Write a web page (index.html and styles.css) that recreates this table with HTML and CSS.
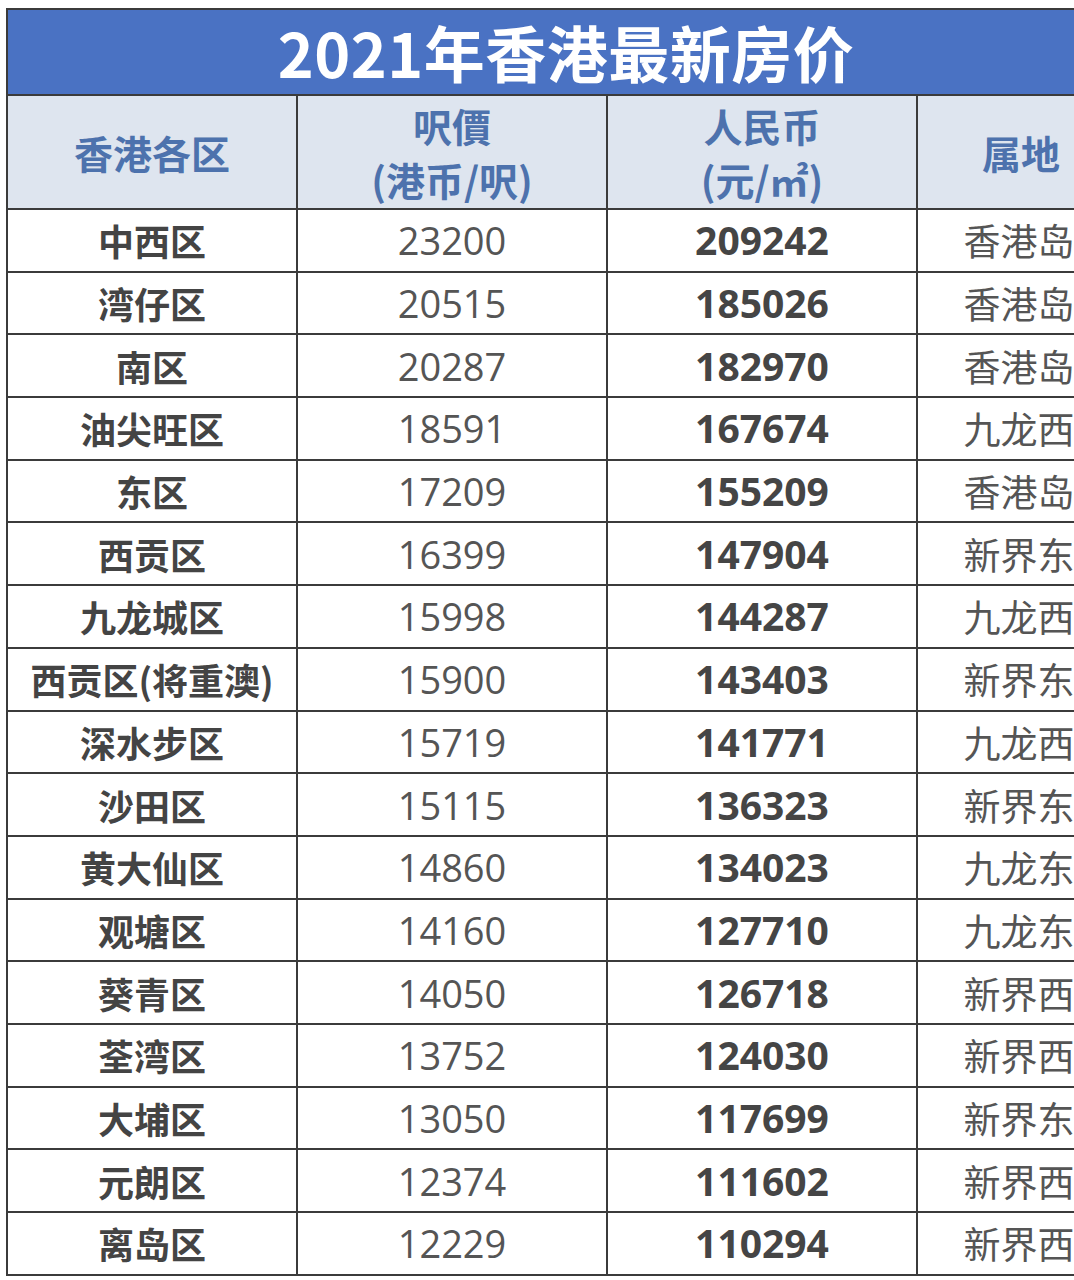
FILE: index.html
```html
<!DOCTYPE html>
<html lang="zh-CN">
<head>
<meta charset="utf-8">
<title>2021年香港最新房价</title>
<link rel="stylesheet" href="styles.css">
</head>
<body>
<table class="price-table">
  <colgroup>
    <col class="c1"><col class="c2"><col class="c3"><col class="c4">
  </colgroup>
  <thead>
    <tr><th class="title" colspan="4">2021年香港最新房价</th></tr>
    <tr class="head">
      <th>香港各区</th>
      <th><span class="hl">呎價</span><span class="hl">(港币/呎)</span></th>
      <th><span class="hl">人民币</span><span class="hl">(元/㎡)</span></th>
      <th>属地</th>
    </tr>
  </thead>
  <tbody>
    <tr><td class="area">中西区</td><td class="hkd">23200</td><td class="rmb">209242</td><td class="region">香港岛</td></tr>
    <tr><td class="area">湾仔区</td><td class="hkd">20515</td><td class="rmb">185026</td><td class="region">香港岛</td></tr>
    <tr><td class="area">南区</td><td class="hkd">20287</td><td class="rmb">182970</td><td class="region">香港岛</td></tr>
    <tr><td class="area">油尖旺区</td><td class="hkd">18591</td><td class="rmb">167674</td><td class="region">九龙西</td></tr>
    <tr><td class="area">东区</td><td class="hkd">17209</td><td class="rmb">155209</td><td class="region">香港岛</td></tr>
    <tr><td class="area">西贡区</td><td class="hkd">16399</td><td class="rmb">147904</td><td class="region">新界东</td></tr>
    <tr><td class="area">九龙城区</td><td class="hkd">15998</td><td class="rmb">144287</td><td class="region">九龙西</td></tr>
    <tr><td class="area">西贡区(将重澳)</td><td class="hkd">15900</td><td class="rmb">143403</td><td class="region">新界东</td></tr>
    <tr><td class="area">深水步区</td><td class="hkd">15719</td><td class="rmb">141771</td><td class="region">九龙西</td></tr>
    <tr><td class="area">沙田区</td><td class="hkd">15115</td><td class="rmb">136323</td><td class="region">新界东</td></tr>
    <tr><td class="area">黄大仙区</td><td class="hkd">14860</td><td class="rmb">134023</td><td class="region">九龙东</td></tr>
    <tr><td class="area">观塘区</td><td class="hkd">14160</td><td class="rmb">127710</td><td class="region">九龙东</td></tr>
    <tr><td class="area">葵青区</td><td class="hkd">14050</td><td class="rmb">126718</td><td class="region">新界西</td></tr>
    <tr><td class="area">荃湾区</td><td class="hkd">13752</td><td class="rmb">124030</td><td class="region">新界西</td></tr>
    <tr><td class="area">大埔区</td><td class="hkd">13050</td><td class="rmb">117699</td><td class="region">新界东</td></tr>
    <tr><td class="area">元朗区</td><td class="hkd">12374</td><td class="rmb">111602</td><td class="region">新界西</td></tr>
    <tr><td class="area">离岛区</td><td class="hkd">12229</td><td class="rmb">110294</td><td class="region">新界西</td></tr>
  </tbody>
</table>
</body>
</html>
```
FILE: styles.css
```css
html, body {
  margin: 0;
  padding: 0;
  background: #ffffff;
  overflow: hidden;
}
body {
  padding: 8px 0 0 6px;
  width: 1200px;
  font-family: "Open Sans", "Noto Sans CJK SC", sans-serif;
}
.price-table {
  border-collapse: collapse;
  table-layout: fixed;
  width: 1118px;
}
.c1 { width: 290px; }
.c2 { width: 310px; }
.c3 { width: 310px; }
.c4 { width: 208px; }
.price-table th,
.price-table td {
  border: 2px solid #3b3b3b;
  padding: 0;
  text-align: center;
  vertical-align: middle;
}
.title {
  height: 84px;
  background: #4a72c3;
  color: #ffffff;
  font-family: "Noto Sans CJK SC", sans-serif;
  font-weight: 700;
  font-size: 61px;
  line-height: 80px;
  letter-spacing: 0.5px;
  border-color: #2e3f66;
}
.head th {
  height: 112px;
  background: #dee5ef;
  color: #4d72ad;
  font-family: "Noto Sans CJK SC", sans-serif;
  font-weight: 700;
  font-size: 39px;
  line-height: 54px;
}
.hl {
  display: block;
  line-height: 54px;
}
.price-table tbody td {
  height: 60.7px;
  font-size: 36px;
  line-height: 44px;
}
.price-table .area {
  font-family: "Noto Sans CJK SC", sans-serif;
  font-weight: 700;
  color: #444444;
  white-space: nowrap;
  font-size: 36px;
}
.price-table .hkd {
  font-family: "Open Sans", sans-serif;
  font-weight: 400;
  color: #555555;
  font-size: 38px;
}
.price-table .rmb {
  font-family: "Open Sans", sans-serif;
  font-weight: 700;
  color: #454545;
  font-size: 39px;
}
.price-table .region {
  font-family: "Noto Sans CJK SC", sans-serif;
  font-weight: 400;
  color: #555555;
  font-size: 37px;
  padding-right: 4px;
}
```
